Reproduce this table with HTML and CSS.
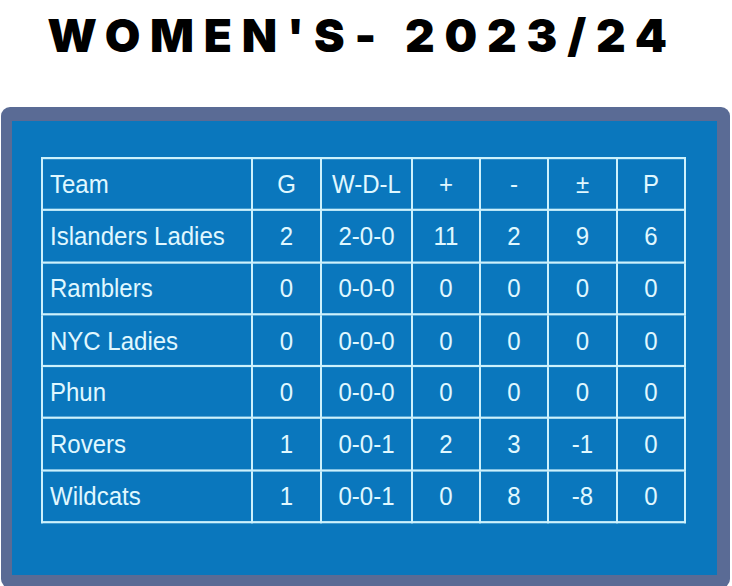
FILE: index.html
```html
<!DOCTYPE html>
<html>
<head>
<meta charset="utf-8">
<link rel="stylesheet" href="styles.css">
</head>
<body>
<h1 class="title">WOMEN'S- 2023/24</h1>
<div class="frame">
  <div class="panel">
    <table class="standings">
      <colgroup>
        <col class="c-team"><col class="c-g"><col class="c-wdl"><col class="c-n"><col class="c-n"><col class="c-g"><col class="c-n">
      </colgroup>
      <tr><td class="team">Team</td><td>G</td><td>W-D-L</td><td>+</td><td>-</td><td>±</td><td>P</td></tr>
      <tr><td class="team">Islanders Ladies</td><td>2</td><td>2-0-0</td><td>11</td><td>2</td><td>9</td><td>6</td></tr>
      <tr><td class="team">Ramblers</td><td>0</td><td>0-0-0</td><td>0</td><td>0</td><td>0</td><td>0</td></tr>
      <tr><td class="team">NYC Ladies</td><td>0</td><td>0-0-0</td><td>0</td><td>0</td><td>0</td><td>0</td></tr>
      <tr><td class="team">Phun</td><td>0</td><td>0-0-0</td><td>0</td><td>0</td><td>0</td><td>0</td></tr>
      <tr><td class="team">Rovers</td><td>1</td><td>0-0-1</td><td>2</td><td>3</td><td>-1</td><td>0</td></tr>
      <tr><td class="team">Wildcats</td><td>1</td><td>0-0-1</td><td>0</td><td>8</td><td>-8</td><td>0</td></tr>
    </table>
  </div>
</div>
</body>
</html>
```
FILE: styles.css
```css
html, body {
  margin: 0;
  padding: 0;
  background: #ffffff;
  overflow: hidden;
}
.title {
  margin: 0;
  height: 107px;
  padding: 12px 8px 0 0;
  box-sizing: border-box;
  text-align: center;
  white-space: nowrap;
  font-family: Inter, "DejaVu Sans", sans-serif;
  font-weight: 900;
  font-size: 46px;
  line-height: 46px;
  letter-spacing: 9.8px;
  color: #000;
}
.frame {
  margin-left: 1px;
  width: 729px;
  box-sizing: border-box;
  background: #5a6b95;
  border-radius: 9px;
  padding: 14px 13px 13px 11px;
}
.panel {
  background: #0a77bd;
  padding: 36px 29px 85px 29px;
}
.standings {
  border-collapse: collapse;
  width: 644px;
  table-layout: fixed;
  transform: scaleY(1.1);
  transform-origin: top left;
  font-family: "Liberation Sans", Arial, sans-serif;
  font-size: 24px;
  color: #e0f8ff;
}
.standings td {
  border: 2px solid #cdf1fc;
  height: 45.3px;
  padding: 0;
  text-align: center;
  vertical-align: middle;
}
.standings td.team {
  text-align: left;
  padding-left: 7px;
}
.c-team { width: 210px; }
.c-g { width: 69px; }
.c-wdl { width: 91px; }
.c-n { width: 68px; }
```
